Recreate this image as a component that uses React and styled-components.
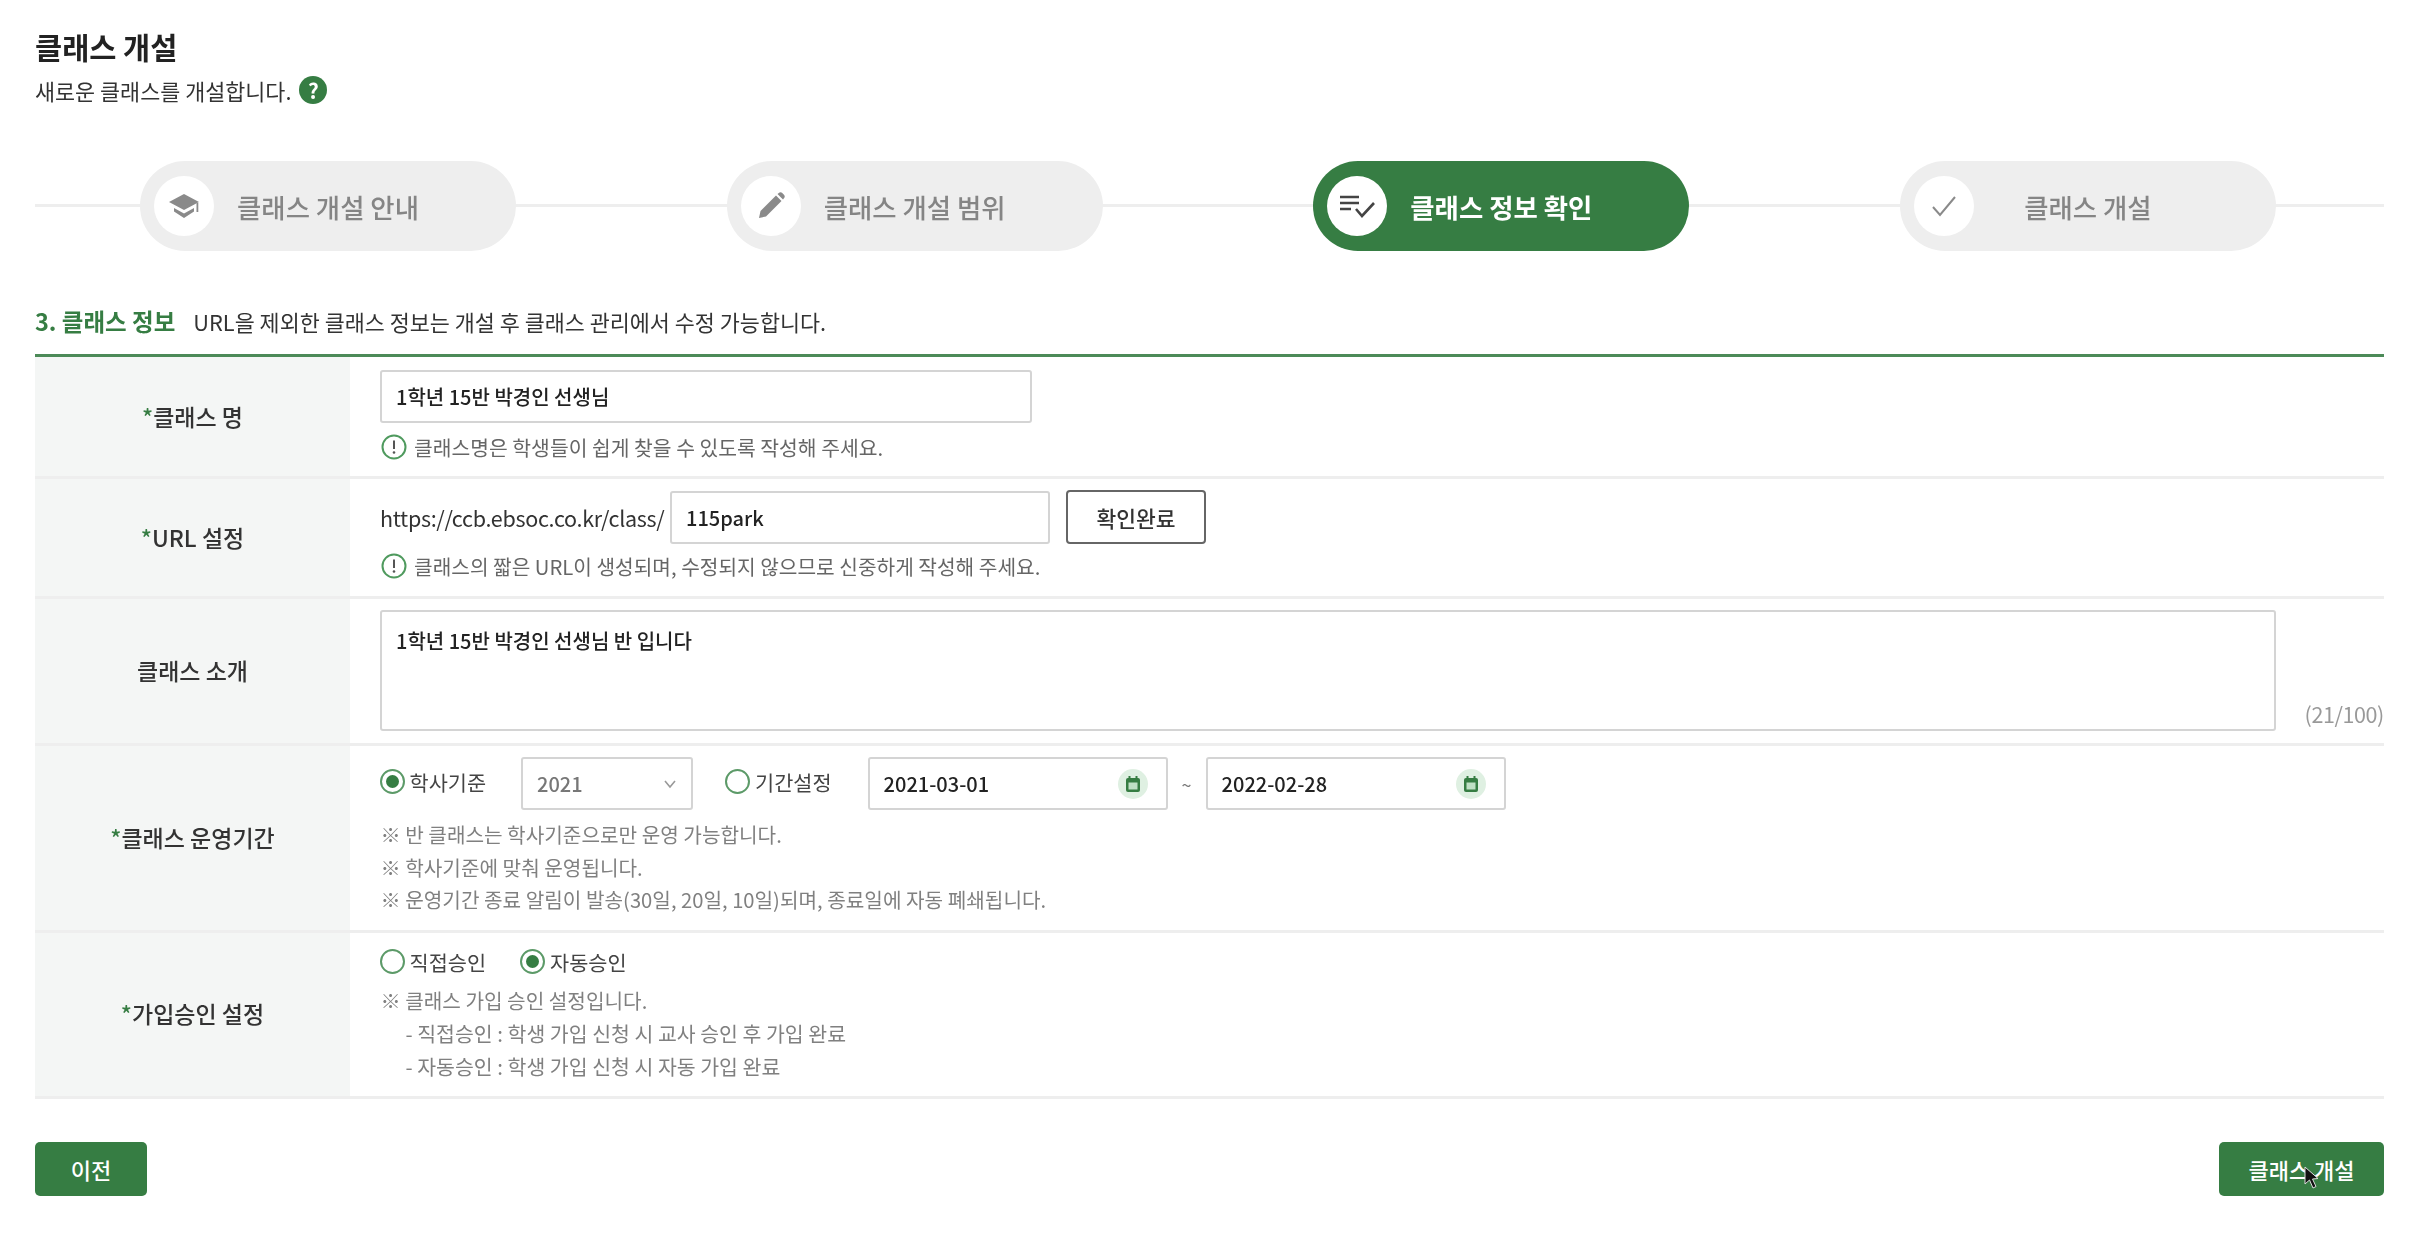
import styled, { createGlobalStyle } from "styled-components"

const GREEN = "#367d43"

const GlobalStyle = createGlobalStyle`
  html, body { margin: 0; padding: 0; background: #fff; }
  body {
    font-family: "Noto Sans CJK KR", "Noto Sans", sans-serif;
    color: #222;
  }
`

// the reference is a soft, upscaled capture, hence the slight blur
const Page = styled.div`
  width: 2434px;
  height: 1248px;
  box-sizing: border-box;
  padding: 27px 50px 0 35px;
  overflow: hidden;
  filter: blur(0.6px);
`

// page heading
const Title = styled.h1`
  margin: 0;
  font-size: 29.5px;
  line-height: 38px;
  font-weight: 700;
  color: #222;
`
const SubRow = styled.div`
  display: flex;
  align-items: center;
  gap: 8px;
  margin-top: 10px;
  height: 30px;
  font-size: 21.8px;
  color: #333;
`
const HelpBadge = styled.span`
  display: flex;
  align-items: center;
  justify-content: center;
  width: 28px;
  height: 28px;
  border-radius: 50%;
  background: ${GREEN};
  color: #fff;
  font-size: 21px;
  font-weight: 700;
  line-height: 1;
`

// the four step pills sitting on one grey line
const StepBar = styled.div`
  position: relative;
  display: flex;
  justify-content: space-between;
  margin-top: 56px;
  padding: 0 108px 0 105px;
  &::before {
    content: "";
    position: absolute;
    left: 0;
    right: 0;
    top: 43px;
    height: 3px;
    background: #eeeeee;
  }
`
const Step = styled.div`
  position: relative;
  display: grid;
  grid-template-columns: 60px 1fr 60px;
  align-items: center;
  width: 376px;
  height: 90px;
  box-sizing: border-box;
  padding: 0 14px;
  border-radius: 45px;
  background: ${(p) => (p.$active ? GREEN : "#eeeeee")};
  color: ${(p) => (p.$active ? "#fff" : "#858585")};
  font-size: 26.4px;
  font-weight: ${(p) => (p.$active ? 700 : 500)};
`
const StepIcon = styled.span`
  display: flex;
  align-items: center;
  justify-content: center;
  width: 60px;
  height: 60px;
  border-radius: 50%;
  background: #fff;
`
const StepLabel = styled.span`
  text-align: center;
  white-space: nowrap;
`

// section heading
const SectionHead = styled.div`
  display: flex;
  align-items: center;
  gap: 18px;
  margin-top: 55px;
  height: 30px;
  font-size: 21.8px;
  color: #333;
`
const SectionName = styled.strong`
  color: ${GREEN};
  font-weight: 700;
  font-size: 23.5px;
`

const Table = styled.div`
  margin-top: 18px;
  border-top: 3px solid #4c8a58;
`
const Row = styled.div`
  display: grid;
  grid-template-columns: 315px 1fr;
  border-bottom: 3px solid #eeeeee;
`
const Label = styled.div`
  display: flex;
  align-items: center;
  justify-content: center;
  padding-bottom: 2px;
  background: #f4f6f5;
  font-size: 23px;
  font-weight: 500;
  color: #333;
  em {
    font-style: normal;
    color: ${GREEN};
  }
`
const Value = styled.div`
  padding: ${(p) => p.$pad};
`
const Inline = styled.div`
  display: flex;
  align-items: center;
`

const Field = styled.div`
  display: flex;
  align-items: center;
  justify-content: space-between;
  box-sizing: border-box;
  width: ${(p) => p.$w}px;
  height: ${(p) => p.$h || 53}px;
  padding: 0 14px;
  border: 2px solid #d4d4d4;
  border-radius: 3px;
  background: #fff;
  font-size: 20px;
  font-weight: 500;
  color: ${(p) => (p.$muted ? "#777" : "#222")};
  white-space: nowrap;
  flex: none;
`
const TextArea = styled(Field)`
  align-items: flex-start;
  padding-top: 14px;
`
const UrlPrefix = styled.span`
  width: 290px;
  font-size: 21.5px;
  letter-spacing: -0.3px;
  color: #333;
  white-space: nowrap;
`
const CheckBtn = styled.button`
  width: 140px;
  height: 54px;
  margin-left: 16px;
  border: 2px solid #666;
  border-radius: 4px;
  background: #fff;
  font-family: inherit;
  font-size: 21.5px;
  font-weight: 500;
  color: #333;
`
const Hint = styled.div`
  display: flex;
  align-items: center;
  gap: 7px;
  height: 28px;
  margin-top: ${(p) => p.$mt || 10}px;
  padding-left: 1px;
  font-size: ${(p) => p.$size || 20.4}px;
  color: #666;
`
const Counter = styled.span`
  align-self: flex-end;
  margin: 0 0 3px auto;
  font-size: 21.5px;
  line-height: 28px;
  letter-spacing: -0.4px;
  color: #999;
`

const Radio = styled.label`
  display: inline-flex;
  align-items: center;
  gap: 5px;
  height: 28px;
  font-size: 20.8px;
  color: #444;
  white-space: nowrap;
  margin-left: ${(p) => p.$ml || 0}px;
  margin-right: ${(p) => p.$mr || 0}px;
  padding-bottom: ${(p) => p.$up || 0}px;
`
const RadioDot = styled.span`
  display: flex;
  align-items: center;
  justify-content: center;
  box-sizing: border-box;
  width: 25px;
  height: 25px;
  border: 2px solid #5c9a68;
  border-radius: 50%;
  &::after {
    content: "";
    display: ${(p) => (p.$on ? "block" : "none")};
    width: 13px;
    height: 13px;
    border-radius: 50%;
    background: ${GREEN};
  }
`
const Tilde = styled.span`
  width: 38px;
  text-align: center;
  font-size: 18px;
  color: #777;
`
const CalBadge = styled.span`
  display: flex;
  align-items: center;
  justify-content: center;
  width: 30px;
  height: 30px;
  margin-right: 4px;
  border-radius: 50%;
  background: #dff0e2;
`
const Notes = styled.div`
  margin-top: ${(p) => p.$mt}px;
  font-size: 20.2px;
  line-height: 32.5px;
  color: #808080;
  padding-left: 1px;
`
const NoteIndent = styled.div`
  padding-left: 25px;
  font-size: 20.5px;
`

const Footer = styled.div`
  display: flex;
  justify-content: space-between;
  margin-top: 43px;
`
const GreenBtn = styled.button`
  position: relative;
  width: ${(p) => p.$w}px;
  height: 54px;
  border: 0;
  border-radius: 5px;
  background: ${GREEN};
  font-family: inherit;
  font-size: 22px;
  font-weight: 500;
  color: #fff;
`
const Cursor = styled.svg`
  position: absolute;
  left: 85px;
  top: 24px;
`

const CapIcon = () => (
  <svg width="36" height="36" viewBox="0 0 36 36" fill="#8a8a8a">
    <path d="M18 6 L33 14 L18 22 L3 14 Z" />
    <path d="M8 20 L18 25.5 L28 20 L28 23.5 L18 30 L8 23.5 Z" />
    <rect x="30.5" y="15" width="1.8" height="9" />
  </svg>
)
const PencilIcon = () => (
  <svg width="36" height="36" viewBox="0 0 36 36" fill="#8a8a8a">
    <path d="M6 30 L7.5 23 L23 7.5 L28.5 13 L13 28.5 Z" />
    <path d="M24.5 6 L26.5 4.5 Q28 3.8 29 4.8 L31.2 7 Q32.2 8 31.5 9.5 L30 11.5 Z" />
  </svg>
)
const ListCheckIcon = () => (
  <svg width="40" height="34" viewBox="0 0 40 34" fill="none" stroke="#444" strokeWidth="2.6">
    <path d="M3 8 H22 M3 14 H22 M3 20 H14" />
    <path d="M19 20 L25 27 L37 14" />
  </svg>
)
const CheckIcon = () => (
  <svg width="32" height="32" viewBox="0 0 32 32" fill="none" stroke="#8a8a8a" strokeWidth="2">
    <path d="M5 17 L12 25 L27 7" />
  </svg>
)
const NoticeIcon = () => (
  <svg width="26" height="26" viewBox="0 0 26 26" style={{ flex: "none" }}>
    <circle cx="13" cy="13" r="11.5" fill="none" stroke="#4f9a5e" strokeWidth="2" />
    <path d="M13 6.5 V15" stroke="#555" strokeWidth="2" />
    <circle cx="13" cy="18.5" r="1.3" fill="#555" />
  </svg>
)
const CalendarIcon = () => (
  <svg width="18" height="18" viewBox="0 0 18 18">
    <rect x="2" y="3" width="14" height="14" rx="2" fill="#367d43" />
    <rect x="4.5" y="7.5" width="9" height="7" fill="#bfe0c5" />
    <rect x="4.5" y="1" width="2" height="4" fill="#367d43" />
    <rect x="11.5" y="1" width="2" height="4" fill="#367d43" />
  </svg>
)

const steps = [
  { label: "클래스 개설 안내", icon: <CapIcon /> },
  { label: "클래스 개설 범위", icon: <PencilIcon /> },
  { label: "클래스 정보 확인", icon: <ListCheckIcon />, active: true },
  { label: "클래스 개설", icon: <CheckIcon /> },
]

const App = () => {
  return (
    <Page>
      <GlobalStyle />
      <Title>클래스 개설</Title>
      <SubRow>
        새로운 클래스를 개설합니다.
        <HelpBadge>?</HelpBadge>
      </SubRow>

      <StepBar>
        {steps.map((s) => (
          <Step key={s.label} $active={s.active}>
            <StepIcon>{s.icon}</StepIcon>
            <StepLabel>{s.label}</StepLabel>
          </Step>
        ))}
      </StepBar>

      <SectionHead>
        <SectionName>3. 클래스 정보</SectionName>
        URL을 제외한 클래스 정보는 개설 후 클래스 관리에서 수정 가능합니다.
      </SectionHead>

      <Table>
        <Row>
          <Label><em>*</em>클래스 명</Label>
          <Value $pad="13px 0 15px 30px">
            <Field $w={652}>1학년 15반 박경인 선생님</Field>
            <Hint>
              <NoticeIcon />
              클래스명은 학생들이 쉽게 찾을 수 있도록 작성해 주세요.
            </Hint>
          </Value>
        </Row>
        <Row>
          <Label><em>*</em>URL 설정</Label>
          <Value $pad="11px 0 16px 30px">
            <Inline>
              <UrlPrefix>https://ccb.ebsoc.co.kr/class/</UrlPrefix>
              <Field $w={380}>115park</Field>
              <CheckBtn>확인완료</CheckBtn>
            </Inline>
            <Hint $mt={8} $size={20.25}>
              <NoticeIcon />
              클래스의 짧은 URL이 생성되며, 수정되지 않으므로 신중하게 작성해 주세요.
            </Hint>
          </Value>
        </Row>
        <Row>
          <Label>클래스 소개</Label>
          <Value $pad="11px 0 12px 30px">
            <Inline>
              <TextArea $w={1896} $h={121}>1학년 15반 박경인 선생님 반 입니다</TextArea>
              <Counter>(21/100)</Counter>
            </Inline>
          </Value>
        </Row>
        <Row>
          <Label><em>*</em>클래스 운영기간</Label>
          <Value $pad="11px 0 13px 29.5px">
            <Inline>
              <Radio $mr={35} $up={4}><RadioDot $on />학사기준</Radio>
              <Field $w={172} $muted>
                2021
                <svg width="14" height="10" viewBox="0 0 14 10" fill="none" stroke="#999" strokeWidth="1.6">
                  <path d="M2 2 L7 8 L12 2" />
                </svg>
              </Field>
              <Radio $ml={32} $mr={36} $up={4}><RadioDot />기간설정</Radio>
              <Field $w={300}>
                2021-03-01
                <CalBadge><CalendarIcon /></CalBadge>
              </Field>
              <Tilde>~</Tilde>
              <Field $w={300}>
                2022-02-28
                <CalBadge><CalendarIcon /></CalBadge>
              </Field>
            </Inline>
            <Notes $mt={9}>
              <div>※ 반 클래스는 학사기준으로만 운영 가능합니다.</div>
              <div>※ 학사기준에 맞춰 운영됩니다.</div>
              <div>※ 운영기간 종료 알림이 발송(30일, 20일, 10일)되며, 종료일에 자동 폐쇄됩니다.</div>
            </Notes>
          </Value>
        </Row>
        <Row>
          <Label><em>*</em>가입승인 설정</Label>
          <Value $pad="15px 0 14px 29.5px">
            <Inline>
              <Radio $mr={34}><RadioDot />직접승인</Radio>
              <Radio><RadioDot $on />자동승인</Radio>
            </Inline>
            <Notes $mt={9}>
              <div>※ 클래스 가입 승인 설정입니다.</div>
              <NoteIndent>- 직접승인 : 학생 가입 신청 시 교사 승인 후 가입 완료</NoteIndent>
              <NoteIndent>- 자동승인 : 학생 가입 신청 시 자동 가입 완료</NoteIndent>
            </Notes>
          </Value>
        </Row>
      </Table>

      <Footer>
        <GreenBtn $w={112}>이전</GreenBtn>
        <GreenBtn $w={165}>
          클래스 개설
          <Cursor width="18" height="24" viewBox="0 0 18 24">
            <path d="M1 1 L1 18 L5.5 14 L9 22 L12 20.5 L8.5 13 L14 12.5 Z" fill="#111" stroke="#ddd" strokeWidth="1" />
          </Cursor>
        </GreenBtn>
      </Footer>
    </Page>
  )
}

export default App
